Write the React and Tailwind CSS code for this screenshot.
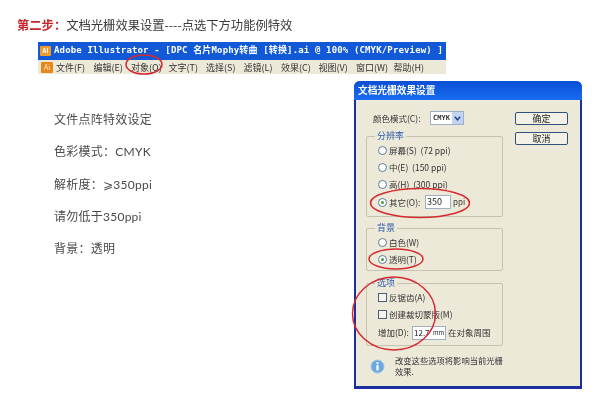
const CJK = { fontFamily: '"Noto Sans CJK SC", "Liberation Sans", sans-serif' };

const menus = ['文件(F)', '编辑(E)', '对象(O)', '文字(T)', '选择(S)', '滤镜(L)', '效果(C)', '视图(V)', '窗口(W)', '帮助(H)'];
const notes = ['文件点阵特效设定', '色彩模式：CMYK', '解析度：⩾350ppi', '请勿低于350ppi', '背景：透明'];

function Radio({ on }) {
  return (
    <span className="w-[9px] h-[9px] rounded-full border border-[#5a7a9c] bg-white flex items-center justify-center shrink-0">
      {on && <span className="w-[3px] h-[3px] rounded-full bg-[#3aa040]" />}
    </span>
  );
}

function Check() {
  return <span className="w-[9px] h-[9px] border border-[#4c5f78] bg-[#f4f3ee] shrink-0" />;
}

function Group({ label, className, children }) {
  return (
    <div className={`relative border border-[#c6c3b2] rounded-[2px] pt-[5px] ${className}`}>
      <span className="absolute left-[8px] -top-[7px] px-[2px] bg-[#ece9d8] text-[#2f5bb0] text-[9px] leading-[12px]">{label}</span>
      {children}
    </div>
  );
}

function Row({ children, h = 'h-[17px]' }) {
  return <div className={`flex items-center gap-[2px] pl-[11px] whitespace-nowrap ${h}`}>{children}</div>;
}

function Field({ className, children }) {
  return (
    <span className={`h-[14px] bg-white border border-[#9fb0c4] flex items-center px-[1px] text-[8px] text-[#222] ${className}`}>
      {children}
    </span>
  );
}

function XpButton({ children }) {
  return (
    <span className="w-[53px] h-[13px] rounded-[2px] border border-[#33507a] bg-[#f3f1e6] flex items-center justify-center text-[9px] leading-none text-[#222]">
      {children}
    </span>
  );
}

export default function App() {
  return (
    <div className="relative w-[600px] h-[403px] bg-white overflow-hidden pl-[17px] pt-[17px] blur-[0.3px]" style={CJK}>
      <h1 className="h-[16px] flex items-center text-[12.3px] font-normal text-[#3a3a3a] whitespace-nowrap">
        <b className="text-[#c4262c] font-bold">第二步：</b>
        <span>文档光栅效果设置----点选下方功能例特效</span>
      </h1>

      <div className="ml-[21px] mt-[9px] w-[408px]">
        <div className="h-[18px] bg-[#1259d8] flex items-center gap-[3px] pl-[2px] text-white font-bold text-[9px] whitespace-nowrap">
          <span className="w-[11px] h-[10px] bg-[#f09a2c] rounded-[1px] text-[6px] leading-[10px] text-center text-white">AI</span>
          <span className="tracking-[0.15px]" style={{ fontFamily: '"DejaVu Sans Mono", "Noto Sans CJK SC", monospace' }}>
            Adobe Illustrator - [DPC 名片Mophy转曲 [转换].ai @ 100% (CMYK/Preview) ]
          </span>
        </div>
        <div className="h-[14px] bg-[#ece9d8] flex items-center pl-[3px] text-[#333] text-[9px] leading-none whitespace-nowrap">
          <span className="w-[12px] h-[11px] bg-[#e8861e] rounded-[1px] mr-[3px] text-[7px] leading-[11px] text-center text-[#fff3d0]">Ai</span>
          {menus.map((m) => (
            <span key={m} className="w-[37.5px] shrink-0">{m}</span>
          ))}
        </div>
      </div>

      <ul className="ml-[37px] mt-[30px] text-[12px] text-[#4a4a4a]" style={{ fontFamily: 'Lato, "Noto Sans CJK SC", "DejaVu Sans", sans-serif' }}>
        {notes.map((n) => (
          <li key={n} className="h-[32.25px] flex items-center whitespace-nowrap tracking-[0.25px]">{n}</li>
        ))}
      </ul>

      <section className="absolute left-[354px] top-[81px] w-[228px] h-[308px] bg-[#ece9d8] border-x-[2px] border-b-[3px] border-[#1c2f9e] rounded-t-[6px] flex flex-col text-[8.5px] text-[#333]">
        <header className="h-[19px] -mx-[2px] shrink-0 rounded-t-[6px] bg-gradient-to-b from-[#0a4fd6] to-[#1a6cf0] text-white font-bold text-[9.7px] flex items-center pl-[4px]">
          文档光栅效果设置
        </header>
        <div className="flex pl-[10px]">
          <div className="w-[137px] shrink-0">
            <div className="mt-[11px] h-[14px] flex items-center pl-[7px]">
              <span className="w-[57px] whitespace-nowrap">颜色模式(C):</span>
              <span className="w-[34px] h-[14px] bg-white border border-[#9fb0c4] flex items-center justify-between pl-[2px] text-[7px] font-bold" style={{ fontFamily: '"DejaVu Sans Mono", monospace' }}>
                CMYK
                <span className="w-[11px] h-[12px] bg-[#c3d3f2] text-[#23408a] flex items-center justify-center">
                  <svg width="7" height="5" viewBox="0 0 7 5"><path d="M0.8 0.8 L3.5 3.8 L6.2 0.8" fill="none" stroke="currentColor" strokeWidth="1.5" /></svg>
                </span>
              </span>
            </div>

            <Group label="分辨率" className="mt-[11px] h-[81px]">
              <Row><Radio /><span>屏幕(S)&nbsp;&nbsp;(72 ppi)</span></Row>
              <Row><Radio /><span>中(E)&nbsp;&nbsp;(150 ppi)</span></Row>
              <Row><Radio /><span>高(H)&nbsp;&nbsp;(300 ppi)</span></Row>
              <Row h="h-[18px]">
                <Radio on /><span className="w-[34px]">其它(O):</span>
                <Field className="w-[26px] text-[9px]">350</Field>
                <span className="text-[8px]">ppi</span>
              </Row>
            </Group>

            <Group label="背景" className="mt-[11px] h-[43px]">
              <Row><Radio /><span>白色(W)</span></Row>
              <Row><Radio on /><span>透明(T)</span></Row>
            </Group>

            <Group label="选项" className="mt-[12px] h-[63px]">
              <Row><Check /><span>反锯齿(A)</span></Row>
              <Row><Check /><span>创建裁切蒙版(M)</span></Row>
              <Row h="h-[19px]">
                <span className="w-[32px]">增加(D):</span>
                <Field className="w-[34px] justify-between">12.7<span className="text-[6px]">mm</span></Field>
                <span>在对象周围</span>
              </Row>
            </Group>
          </div>
          <div className="ml-[12px] mt-[12px] flex flex-col gap-[7px]">
            <XpButton>确定</XpButton>
            <XpButton>取消</XpButton>
          </div>
        </div>
        <div className="flex items-center pl-[14px] mt-[9px]">
          <svg width="15" height="15" viewBox="0 0 15 15" className="shrink-0">
            <circle cx="7.5" cy="7.5" r="6.5" fill="#6fa8dc" stroke="#9cc2e6" />
            <circle cx="7.5" cy="4.2" r="1.1" fill="#fff" />
            <rect x="6.4" y="6.2" width="2.2" height="5.2" fill="#fff" />
          </svg>
          <p className="ml-[10px] w-[112px] text-[8.3px] leading-[11px]">改变这些选项将影响当前光栅<br />效果.</p>
        </div>
      </section>

      <svg className="absolute inset-0 pointer-events-none" width="600" height="403" viewBox="0 0 600 403" fill="none" stroke="#d42a30" strokeWidth="1.5">
        <ellipse cx="144" cy="64.5" rx="18" ry="9.5" />
        <ellipse cx="420" cy="203" rx="49.5" ry="14.5" />
        <ellipse cx="396" cy="259" rx="27" ry="10" />
        <ellipse cx="394" cy="313.5" rx="41.5" ry="36.5" />
      </svg>
    </div>
  );
}
